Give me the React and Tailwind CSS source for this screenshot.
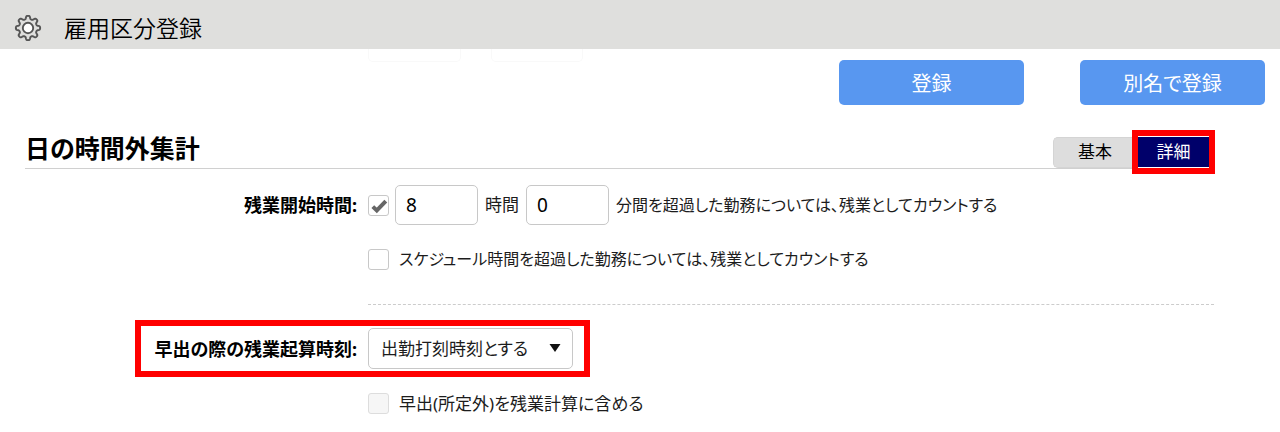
import React, { useState } from 'react';

// eight rounded teeth around the hub
const gearPoints = Array.from({ length: 160 }, (_, i) => {
  const angle = (i / 160) * Math.PI * 2;
  const radius = 10.6 + 1.6 * Math.tanh(2 * Math.cos(8 * angle));
  return `${(radius * Math.cos(angle)).toFixed(2)},${(radius * Math.sin(angle)).toFixed(2)}`;
}).join(' ');

function GearIcon() {
  return (
    <svg
      viewBox="-14 -14 28 28"
      className="h-7 w-7 shrink-0"
      fill="none"
      stroke="#555555"
      strokeWidth="1.9"
      strokeLinejoin="round"
      aria-hidden="true"
    >
      <polygon points={gearPoints} />
      <circle r="5.2" fill="#ffffff" />
    </svg>
  );
}

function Checkbox({ id, label, ...props }) {
  return (
    <span className="relative h-[21px] w-[21px] shrink-0">
      <input
        id={id}
        type="checkbox"
        aria-label={label}
        className="peer block h-[21px] w-[21px] appearance-none rounded-[3px] border border-[#c8c8c8] bg-white disabled:border-[#dddddd] disabled:bg-[#f6f6f6]"
        {...props}
      />
      <svg
        viewBox="0 0 21 21"
        className="pointer-events-none absolute inset-0 hidden h-full w-full peer-checked:block"
        fill="none"
        stroke="#666666"
        strokeWidth="4"
        aria-hidden="true"
      >
        <path d="M4.8 11.6 L8.8 15.4 L17.8 6.2" />
      </svg>
    </span>
  );
}

function SubmitButton({ children }) {
  return (
    <button
      type="button"
      className="h-[45px] w-[185px] rounded-[5px] bg-[#5897f0] pt-0.5 text-xl text-white"
    >
      {children}
    </button>
  );
}

function App() {
  const [tab, setTab] = useState('detail');
  const [hours, setHours] = useState('8');
  const [minutes, setMinutes] = useState('0');

  const fieldClass =
    'h-10 w-[83px] rounded-[5px] border border-[#c8c8c8] bg-white px-2.5 text-[19px] text-black';

  return (
    <div className="bg-white font-['Noto_Sans','Noto_Sans_CJK_JP',sans-serif] text-[17px] text-[#1c1c1c] [font-feature-settings:'palt']">
      <header className="flex h-[49px] items-center gap-[22px] bg-[#dfdfdd] pt-1.5 pl-3.5">
        <GearIcon />
        <h1 className="text-[23px] leading-8 font-[350] text-black">雇用区分登録</h1>
      </header>

      <main>
        <div className="flex items-start pr-[15px]">
          {/* lower edge of the row scrolled under the header */}
          <div className="flex gap-[30px] pl-[368px]" aria-hidden="true">
            <div className="h-[13px] w-[93px] rounded-b-[5px] border border-t-0 border-[#f9f9f9]" />
            <div className="h-[13px] w-[92px] rounded-b-[5px] border border-t-0 border-[#f9f9f9]" />
          </div>
          <div className="ml-auto flex gap-14 pt-[11px]">
            <SubmitButton>登録</SubmitButton>
            <SubmitButton>別名で登録</SubmitButton>
          </div>
        </div>

        <section className="pr-[66px] pl-[25px]">
          <div className="mt-[25px] flex h-[39px] items-end border-b border-[#d0d0d0]">
            <h2 className="pb-0.5 text-[25px] leading-9 font-bold text-black">日の時間外集計</h2>
            <div className="-mr-px -mb-1.5 ml-auto flex items-center" role="tablist">
              <button
                type="button"
                role="tab"
                aria-selected={tab === 'basic'}
                onClick={() => setTab('basic')}
                className="h-[31px] w-[79px] rounded-l-[5px] border border-r-0 border-[#d4d4d4] bg-[#dddddd] pl-1 text-black"
              >
                基本
              </button>
              <div className="border-6 border-[#ff0000] bg-white py-px">
                <button
                  type="button"
                  role="tab"
                  aria-selected={tab === 'detail'}
                  onClick={() => setTab('detail')}
                  className="block h-[30px] w-[71px] bg-[#00006a] text-white"
                >
                  詳細
                </button>
              </div>
            </div>
          </div>

          <div className="mt-4 flex items-center">
            <div className="w-[332px] text-right text-lg font-bold text-black">残業開始時間:</div>
            <div className="ml-[11px] flex items-center">
              <Checkbox label="残業開始時間" defaultChecked />
              <input
                type="text"
                aria-label="時間"
                value={hours}
                onChange={(e) => setHours(e.target.value)}
                className={`ml-1.5 ${fieldClass}`}
              />
              <span className="mx-[7px]">時間</span>
              <input
                type="text"
                aria-label="分間"
                value={minutes}
                onChange={(e) => setMinutes(e.target.value)}
                className={fieldClass}
              />
              <span className="ml-[7px] text-base">
                分間を超過した勤務については、残業としてカウントする
              </span>
            </div>
          </div>

          <div className="mt-6 ml-[343px] flex items-center gap-2.5 border-b border-dashed border-[#cccccc] pb-[34px]">
            <Checkbox id="over-schedule" />
            <label htmlFor="over-schedule" className="text-base leading-[21px]">
              スケジュール時間を超過した勤務については、残業としてカウントする
            </label>
          </div>

          <div className="mt-[15px] ml-[110px] flex h-[57px] w-fit items-center border-6 border-[#ff0000] pr-[11px]">
            <label
              htmlFor="start-time"
              className="w-[216px] text-right text-lg font-bold text-black"
            >
              早出の際の残業起算時刻:
            </label>
            <div className="relative ml-[11px]">
              <select
                id="start-time"
                className="block h-[41px] w-[205px] appearance-none rounded-[5px] border border-[#c8c8c8] bg-white pl-3"
              >
                <option>出勤打刻時刻とする</option>
              </select>
              <svg
                viewBox="0 0 12 8"
                className="pointer-events-none absolute top-4 right-3 h-2 w-3"
                fill="#111111"
                aria-hidden="true"
              >
                <path d="M0.5 0 H11.5 L6 8 Z" />
              </svg>
            </div>
          </div>

          <div className="mt-4 ml-[343px] flex items-center gap-2.5">
            <Checkbox id="early-start" disabled />
            <label htmlFor="early-start" className="leading-[21px]">
              早出(所定外)を残業計算に含める
            </label>
          </div>
        </section>
      </main>
    </div>
  );
}

export default App;
